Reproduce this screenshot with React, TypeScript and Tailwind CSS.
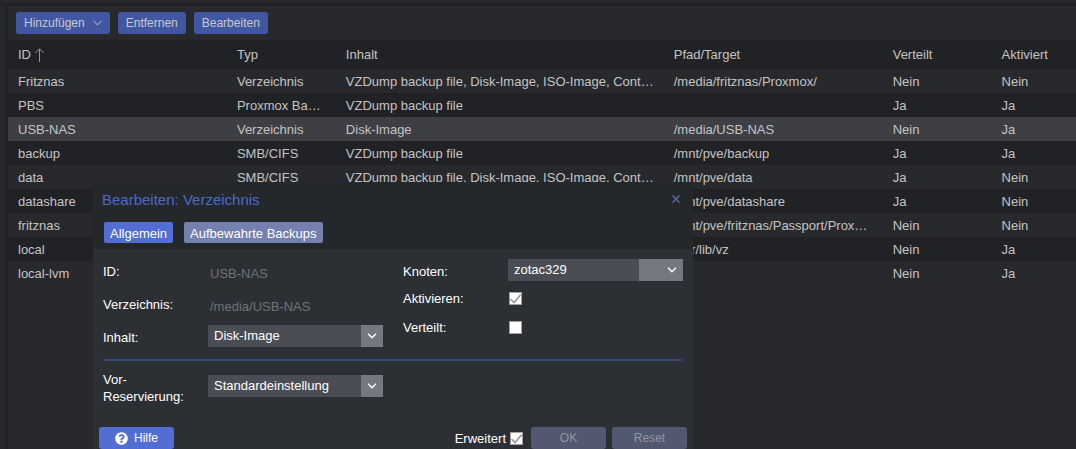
import React from "react";
import { FaQuestionCircle } from "react-icons/fa";

const storages = [
    { id: "Fritznas", type: "Verzeichnis", content: "VZDump backup file, Disk-Image, ISO-Image, Container", path: "/media/fritznas/Proxmox/", shared: false, enabled: false },
    { id: "PBS", type: "Proxmox Backup Server", content: "VZDump backup file", path: "", shared: true, enabled: true },
    { id: "USB-NAS", type: "Verzeichnis", content: "Disk-Image", path: "/media/USB-NAS", shared: false, enabled: true },
    { id: "backup", type: "SMB/CIFS", content: "VZDump backup file", path: "/mnt/pve/backup", shared: true, enabled: true },
    { id: "data", type: "SMB/CIFS", content: "VZDump backup file, Disk-Image, ISO-Image, Container", path: "/mnt/pve/data", shared: true, enabled: false },
    { id: "datashare", type: "", content: "", path: "/mnt/pve/datashare", shared: true, enabled: false },
    { id: "fritznas", type: "", content: "", path: "/mnt/pve/fritznas/Passport/Proxmox", shared: false, enabled: false },
    { id: "local", type: "", content: "", path: "/var/lib/vz", shared: false, enabled: true },
    { id: "local-lvm", type: "", content: "", path: "", shared: false, enabled: true },
];

const yesNo = (value: boolean) => (value ? "Ja" : "Nein");

const ToolbarButton = ({ children }: { children: React.ReactNode }) => (
    <button type="button" className="flex h-[22px] items-center gap-2 rounded-[3px] bg-[#4257a2] px-2 text-xs text-[#c8c9cc]">
        {children}
    </button>
);

const Checkbox = ({ id, checked }: { id: string; checked?: boolean }) => (
    <span className="relative block h-[13px] w-[13px]">
        <input
            id={id}
            type="checkbox"
            defaultChecked={checked}
            className="peer block h-[13px] w-[13px] appearance-none border border-[#a0a0a0] bg-white"
        />
        <svg viewBox="0 0 13 13" className="pointer-events-none absolute inset-0 hidden h-full w-full peer-checked:block" fill="none" stroke="#969696" strokeWidth="1.6">
            <path d="M1.5 7 L5 10.5 L11.7 2.8" />
        </svg>
    </span>
);

const ComboBox = ({ id, value, wide }: { id: string; value: string; wide?: boolean }) => (
    <div className="relative h-[22px] flex-1">
        <select id={id} className="block h-full w-full appearance-none bg-[#4b4d54] px-[6px] pb-[2px] text-white">
            <option>{value}</option>
        </select>
        <span className={`pointer-events-none absolute inset-y-0 right-0 flex items-center justify-end bg-[#75787e] pr-[6px] ${wide ? "w-11" : "w-[22px]"}`}>
            <svg width="10" height="6" viewBox="0 0 10 6" fill="none" stroke="#fff" strokeWidth="1.4">
                <path d="M1 0.8 L5 4.8 L9 0.8" />
            </svg>
        </span>
    </div>
);

const Label = ({ htmlFor, multiline, children }: { htmlFor: string; multiline?: boolean; children: React.ReactNode }) => (
    <label htmlFor={htmlFor} className={`w-[105px] shrink-0 pr-1 ${multiline ? "-mt-1" : "pt-1"}`}>
        {children}
    </label>
);

const EditWindow = () => (
    <div role="dialog" aria-label="Bearbeiten: Verzeichnis" className="absolute left-[93px] top-[182px] w-[600px] bg-[#2c3034] leading-[17px] text-white">
        {/* Title and tabs */}
        <div className="bg-[#24282b] px-[11px] pb-[6px] pt-[7px]">
            <div className="flex h-5 items-center justify-between">
                <h2 className="-ml-[2px] text-[15px] text-[#4e68cc]">Bearbeiten: Verzeichnis</h2>
                <button type="button" aria-label="Schließen" className="flex h-4 w-3 items-center justify-center">
                    <svg width="8" height="8" viewBox="0 0 8 8" fill="none" stroke="#5567ab" strokeWidth="1.5">
                        <path d="M0.5 0.5 L7.5 7.5 M7.5 0.5 L0.5 7.5" />
                    </svg>
                </button>
            </div>
            <div className="mt-[13px] flex gap-[11px]">
                <button type="button" className="h-[21px] rounded-[2px] bg-[#526dd3] px-[6px] pt-px">Allgemein</button>
                <button type="button" className="h-[21px] rounded-[2px] bg-[#7480ad] px-[6px] pt-px">Aufbewahrte Backups</button>
            </div>
        </div>

        {/* Form */}
        <form className="px-[10px] pt-[10px]">
            <div className="grid grid-cols-2 gap-5">
                <div className="flex flex-col gap-[5px]">
                    <div className="flex h-7">
                        <Label htmlFor="storage-id">ID:</Label>
                        <output id="storage-id" className="px-[2px] pt-[6px] text-[#6f7376]">USB-NAS</output>
                    </div>
                    <div className="flex h-7">
                        <Label htmlFor="directory">Verzeichnis:</Label>
                        <output id="directory" className="px-[2px] pt-[6px] text-[#6f7376]">/media/USB-NAS</output>
                    </div>
                    <div className="flex">
                        <Label htmlFor="content">Inhalt:</Label>
                        <ComboBox id="content" value="Disk-Image" />
                    </div>
                </div>
                <div className="flex flex-col gap-[5px]">
                    <div className="flex h-[22px]">
                        <Label htmlFor="nodes">Knoten:</Label>
                        <ComboBox id="nodes" value="zotac329" wide />
                    </div>
                    <div className="flex h-6">
                        <Label htmlFor="enable">Aktivieren:</Label>
                        <div className="pl-px pt-[6px]"><Checkbox id="enable" checked /></div>
                    </div>
                    <div className="flex h-6">
                        <Label htmlFor="shared">Verteilt:</Label>
                        <div className="pl-px pt-[6px]"><Checkbox id="shared" /></div>
                    </div>
                </div>
            </div>

            <hr className="mb-[14px] mt-3 border-t-2 border-[#35446f]" />

            <div className="grid grid-cols-2 gap-5">
                <div className="flex h-[42px]">
                    <Label htmlFor="preallocation" multiline>Vor-Reservierung:</Label>
                    <ComboBox id="preallocation" value="Standardeinstellung" />
                </div>
            </div>
        </form>

        {/* Footer */}
        <div className="flex items-center gap-[6px] px-[6px] pt-[10px]">
            <button type="button" className="flex h-[22px] w-[75px] items-center justify-center gap-[6px] rounded-[3px] bg-[#526dd3] text-xs">
                <FaQuestionCircle size={13} />
                Hilfe
            </button>
            <div className="ml-auto mr-[2px] flex items-center gap-1">
                <label htmlFor="advanced">Erweitert</label>
                <Checkbox id="advanced" checked />
            </div>
            <button type="button" disabled className="h-[22px] w-[75px] rounded-[3px] bg-[#525870] text-xs text-[#94969d]">OK</button>
            <button type="button" disabled className="h-[22px] w-[75px] rounded-[3px] bg-[#525870] text-xs text-[#94969d]">Reset</button>
        </div>
    </div>
);

const App = () => {
    const selected = "USB-NAS";

    return (
        <div className="relative flex h-screen flex-col gap-[3px] overflow-hidden bg-[#212226] font-['Liberation_Sans',Arial,sans-serif] text-[13px] leading-[17px] text-[#c4c4c4]">
            <div className="h-[3px] shrink-0 bg-[#28292d]" />
            <div className="flex min-h-0 flex-1 gap-[3px]">
                <div className="w-[5px] shrink-0 bg-[#28292d]" />
                <main className="min-w-0 flex-1 bg-[#28292d]">
                    <div className="flex gap-2 px-2 py-[6px]">
                        <ToolbarButton>
                            Hinzufügen
                            <svg width="9" height="6" viewBox="0 0 9 6" fill="none" stroke="#959cb8" strokeWidth="1.2">
                                <path d="M0.5 0.7 L4.5 4.8 L8.5 0.7" />
                            </svg>
                        </ToolbarButton>
                        <ToolbarButton>Entfernen</ToolbarButton>
                        <ToolbarButton>Bearbeiten</ToolbarButton>
                    </div>

                    <table className="w-full table-fixed text-left">
                        <thead>
                            <tr className="h-[29px] bg-[#212226] [&>th]:px-[10px] [&>th]:font-normal">
                                <th className="w-[20.5%]">
                                    <span className="flex items-center gap-1">
                                        ID
                                        <svg width="9" height="14" viewBox="0 0 9 14" fill="none" stroke="#97979a">
                                            <path d="M4.5 14 V1 M0.4 5 L4.5 0.8 L8.6 5" />
                                        </svg>
                                    </span>
                                </th>
                                <th className="w-[10.2%]">Typ</th>
                                <th className="w-[30.7%]">Inhalt</th>
                                <th className="w-[20.5%]">Pfad/Target</th>
                                <th className="w-[10.2%]">Verteilt</th>
                                <th>Aktiviert</th>
                            </tr>
                        </thead>
                        <tbody>
                            {storages.map((s) => (
                                <tr
                                    key={s.id}
                                    className={`h-6 [&>td]:truncate [&>td]:px-[10px] ${s.id === selected ? "bg-[#3e3f44]" : "odd:bg-[#28292d] even:bg-[#212226]"}`}
                                >
                                    <td>{s.id}</td>
                                    <td>{s.type}</td>
                                    <td>{s.content}</td>
                                    <td>{s.path}</td>
                                    <td>{yesNo(s.shared)}</td>
                                    <td>{yesNo(s.enabled)}</td>
                                </tr>
                            ))}
                        </tbody>
                    </table>
                </main>
            </div>

            <EditWindow />
        </div>
    );
};

export default App;
